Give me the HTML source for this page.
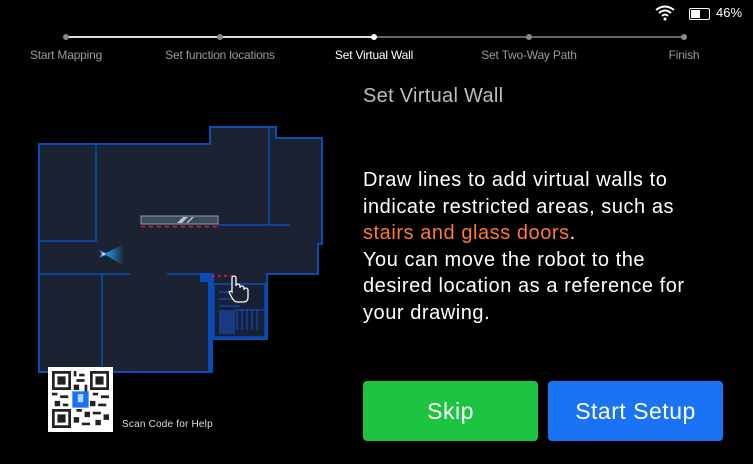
<!DOCTYPE html>
<html><head><meta charset="utf-8"><style>
body{margin:0;width:753px;height:464px;background:#000;overflow:hidden;font-family:"Liberation Sans",sans-serif;position:relative;color:#fff}
.lbl{position:absolute;top:48px;font-size:12px;color:#9a9a9a;transform:translateX(-50%);white-space:nowrap;letter-spacing:-0.2px}
.dot{position:absolute;top:34px;width:6px;height:6px;border-radius:50%;background:#8a8a8a;margin-left:-3px}
.btn{position:absolute;top:381px;width:175px;height:60px;border-radius:4px;font-size:23px;letter-spacing:0.5px;line-height:60px;text-align:center;color:#fff}
</style></head><body>
<svg style="position:absolute;left:655px;top:5px" width="20" height="16" viewBox="0 0 20 16"><path d="M1 5 Q10 -2 19 5" stroke="#fff" stroke-width="2" fill="none"/><path d="M4 8 Q10 3 16 8" stroke="#fff" stroke-width="2" fill="none"/><path d="M7 11 Q10 8 13 11" stroke="#fff" stroke-width="2" fill="none"/><circle cx="10" cy="14" r="1.5" fill="#fff"/></svg>
<div style="position:absolute;left:689px;top:8px;width:19px;height:10px;border:1px solid #fff;border-radius:2px"><div style="width:9px;height:8px;margin:1px;background:#fff"></div></div>
<div style="position:absolute;left:716px;top:5px;font-size:13px">46%</div>
<div style="position:absolute;left:66px;top:36px;width:308px;height:2px;background:#ddd"></div>
<div style="position:absolute;left:374px;top:36px;width:310px;height:2px;background:#666"></div>
<div class="dot" style="left:66px"></div><div class="dot" style="left:220px"></div><div class="dot" style="left:374px;background:#fff"></div><div class="dot" style="left:529px"></div><div class="dot" style="left:684px"></div>
<div class="lbl" style="left:66px">Start Mapping</div>
<div class="lbl" style="left:220px">Set function locations</div>
<div class="lbl" style="left:374px;color:#fff">Set Virtual Wall</div>
<div class="lbl" style="left:529px">Set Two-Way Path</div>
<div class="lbl" style="left:684px">Finish</div>
<svg style="position:absolute;left:0;top:0" width="340" height="380" viewBox="0 0 340 380">
<path d="M39 144 H210 V127 H276 V138 H322 V244 H318 V274 H267 V339 H212 V372 H39 Z" fill="#1b2232" stroke="#0b4cb8" stroke-width="2"/>
<g stroke="#0b4cb8" stroke-width="1.5" fill="none">
<path d="M96 144 V241 H39"/><path d="M269 127 V225"/><path d="M218 225 H290"/>
<path d="M39 274 H130"/><path d="M167 274 H200"/><path d="M102 274 V372"/>
</g>
<rect x="200" y="273" width="14" height="9" fill="#0b4cb8"/>
<rect x="208" y="280" width="5" height="92" fill="#0b4cb8"/>
<path d="M214 284 H265 V337 H214 Z" fill="#172036" stroke="#0b4cb8" stroke-width="1.5"/>
<rect x="219" y="310" width="16" height="24" fill="#173a80"/>
<g stroke="#0b4cb8" stroke-width="1.2"><path d="M219 292 H240 M219 299 H240 M219 306 H240 M237 310 V330 M242 310 V330 M247 310 V330 M252 310 V330 M257 310 V330 M235 310 H265"/></g>
<rect x="141" y="216" width="77" height="8" fill="#3c4a5e" stroke="#8d9aaa" stroke-width="1"/>
<path d="M177 223 L183 217 H188 L182 223 Z M186 223 L192 217 H194 L188 223Z" fill="#b8c2cf"/>
<path d="M141 226.5 H218" stroke="#e02020" stroke-width="1.5" stroke-dasharray="4 4"/>
<path d="M212 276 H236" stroke="#e02020" stroke-width="1.5" stroke-dasharray="3 3"/>
<defs><linearGradient id="g" x1="0" x2="1"><stop offset="0" stop-color="#1ab0ff"/><stop offset="1" stop-color="#1ab0ff" stop-opacity="0"/></linearGradient></defs>
<path d="M104 254 L124 244 V266 Z" fill="url(#g)"/>
<path d="M100 251 L108 254 L100 257 L102 254 Z" fill="#dde" stroke="#3a6fd0" stroke-width="1"/>
<path d="M232 292 V278 a2 2 0 0 1 4 0 V286 a2 2 0 0 1 4 0 V288 a2 2 0 0 1 4 0 V290 a2 2 0 0 1 4 0 V297 Q248 302 243 302 H237 Q234 302 231 296 L229 292 a2 2 0 0 1 3 0 Z" fill="#1b2232" stroke="#fff" stroke-width="1.3"/>
</svg>
<div style="position:absolute;left:48px;top:367px;width:65px;height:65px;background:#fff"></div>
<svg style="position:absolute;left:52px;top:371px" width="57" height="57" viewBox="0 0 21 21">
<g fill="#222"><path d="M0 0h7v7H0zM1 1v5h5V1zM2 2h3v3H2z" fill-rule="evenodd"/><path d="M14 0h7v7h-7zM15 1v5h5V1zM16 2h3v3h-3z" fill-rule="evenodd"/><path d="M0 14h7v7H0zM1 15v5h5v-5zM2 16h3v3H2z" fill-rule="evenodd"/>
<path d="M8 0h1v2H8zM10 1h2v1h-2zM9 3h3v1H9zM8 5h2v2H8zM12 5h1v3h-1zM0 8h2v1H0zM3 9h3v1H3zM1 11h2v2H1zM4 12h2v1H4zM15 8h2v1h-2zM18 9h3v1h-3zM14 11h2v2h-2zM17 12h3v1h-3zM9 14h2v1H9zM12 15h2v2h-2zM8 17h2v2H8zM11 19h3v1h-3zM15 15h3v1h-3zM16 18h2v2h-2zM19 16h2v2h-2zM10 9h1v1h-1z"/></g>
<rect x="7.5" y="7.5" width="6" height="6" fill="#1a73f5"/><rect x="9.5" y="8.5" width="2" height="3" fill="#fff" opacity=".7"/></svg>
<div style="position:absolute;left:122px;top:419px;font-size:10px;color:#ddd;letter-spacing:0.2px">Scan Code for Help</div>
<div style="position:absolute;left:363px;top:85px;font-size:20px;letter-spacing:0.3px;color:#bdbdbd">Set Virtual Wall</div>
<div style="position:absolute;left:363px;top:167px;font-size:20px;letter-spacing:0.55px;line-height:26.6px;width:390px">Draw lines to add virtual walls to<br>indicate restricted areas, such as<br><span style="color:#ff7a2e">stairs and glass doors</span>.<br>You can move the robot to the<br>desired location as a reference for<br>your drawing.</div>
<div class="btn" style="left:363px;background:#1dc441">Skip</div>
<div class="btn" style="left:548px;background:#1a73f5">Start Setup</div>
</body></html>
